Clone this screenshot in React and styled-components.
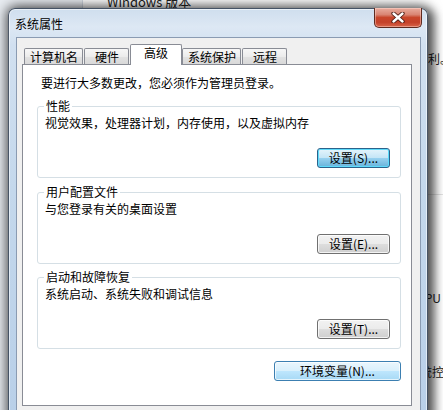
import React from 'react';
import styled, { createGlobalStyle } from 'styled-components';

const GlobalStyle = createGlobalStyle`
  html, body { margin: 0; padding: 0; }
  body {
    width: 443px; height: 410px; overflow: hidden; background: #fff;
    font-family: "Noto Sans CJK SC", "Noto Sans", sans-serif;
    font-size: 12px; color: #000;
  }
  * { box-sizing: border-box; }
`;

const Desktop = styled.div`
  position: relative;
  width: 443px;
  height: 410px;
  overflow: hidden;
  background: #fff;
`;

/* ---------- window behind the dialog ---------- */
const BackWindow = styled.div`
  position: absolute;
  inset: 0;
  display: flex;
`;
const NavPane = styled.div`
  width: 83px;
  flex: none;
  background: #e9edf2;
  border-right: 1px solid #d3dae3;
`;
const BackMain = styled.div`
  flex: 1;
  display: flex;
  flex-direction: column;
  min-width: 0;
`;
const BackLine = styled.div`
  margin-top: ${p => p.$top}px;
  padding-left: ${p => p.$indent}px;
  font-size: ${p => p.$size || 12}px;
  line-height: ${p => (p.$size ? p.$size + 3 : 14)}px;
  color: #222;
  white-space: nowrap;
`;
const BackRule = styled.div`
  margin-top: ${p => p.$top}px;
  height: 1px;
  background: #e2e2e2;
`;

/* ---------- dialog ---------- */
const Dialog = styled.div`
  position: absolute;
  left: 8px;
  top: 8px;
  width: 420px;
  height: 430px;
  display: flex;
  flex-direction: column;
  padding: 0 6px 0 7px;
  border: 1px solid rgba(20, 30, 45, 0.7);
  border-radius: 7px 7px 0 0;
  background: linear-gradient(180deg, #cfdeee 0px, #dde8f4 18px, #d1e0f0 36px, #c4d8ec 180px, #b8cfe8 420px);
  box-shadow: inset 0 0 0 1px rgba(255, 255, 255, 0.55), 0 0 12px 3px rgba(0, 0, 0, 0.5),
    5px 3px 10px 2px rgba(0, 0, 0, 0.45);
`;

const TitleBar = styled.div`
  height: 28px;
  flex: none;
  display: flex;
  margin: 0 -6px 0 -7px;
  padding: 0 5px 0 6px;
`;
const Title = styled.div`
  align-self: center;
  font-size: 12px;
  line-height: 14px;
  margin-top: 1px;
  color: #000;
`;
const CloseButton = styled.div`
  margin-left: auto;
  margin-top: -1px;
  width: 48px;
  height: 20px;
  display: flex;
  align-items: center;
  justify-content: center;
  border: 1px solid #5e2a20;
  border-top: none;
  border-radius: 0 0 5px 5px;
  background: linear-gradient(180deg, #e9ad9f 0%, #d98573 35%, #c8462b 50%, #c4412a 75%, #d8654a 100%);
  box-shadow: inset 0 0 0 1px rgba(255, 220, 210, 0.45);
`;

const Client = styled.div`
  flex: 1;
  display: flex;
  flex-direction: column;
  background: #f0f0f0;
  border: 1px solid #8a9bb2;
  padding: 6px 8px 0 5px;
`;

const TabStrip = styled.div`
  display: flex;
  align-items: flex-end;
  padding-left: 2px;
  height: 20px;
  position: relative;
  z-index: 1;
`;
const Tab = styled.div`
  height: ${p => (p.$active ? 21 : 16)}px;
  min-width: ${p => (p.$active ? 52 : 45)}px;
  margin-right: ${p => (p.$active ? 0 : 1)}px;
  margin-bottom: ${p => (p.$active ? -1 : 0)}px;
  padding: ${p => (p.$active ? '0 0 4px' : '0 4px 0 5px')};
  display: flex;
  align-items: center;
  justify-content: center;
  border: 1px solid #898c95;
  border-bottom: none;
  border-radius: 2px 2px 0 0;
  background: ${p =>
    p.$active ? '#fff' : 'linear-gradient(180deg, #f7f7f7 0%, #ececec 50%, #e2e2e2 51%, #d9d9d9 100%)'};
  font-size: 12px;
  line-height: 14px;
  white-space: nowrap;
`;

const Panel = styled.div`
  height: 342px;
  flex: none;
  display: flex;
  flex-direction: column;
  background: #fff;
  border: 1px solid #898c95;
  padding: 11px 10px 0 14px;
`;
const Intro = styled.div`
  margin-left: 4px;
  line-height: 14px;
`;

const Group = styled.div`
  position: relative;
  margin-top: ${p => p.$top}px;
  height: 72px;
  display: flex;
  flex-direction: column;
  border: 1px solid #d5dfe5;
  border-radius: 3px;
  padding: 9px 10px 9px 7px;
`;
const GroupLabel = styled.div`
  position: absolute;
  top: -8px;
  left: 6px;
  padding: 0 2px;
  background: #fff;
  line-height: 14px;
`;
const Desc = styled.div`
  line-height: 14px;
`;
const ButtonRow = styled.div`
  margin-top: auto;
  display: flex;
  justify-content: flex-end;
`;
const EnvRow = styled.div`
  margin-top: 12px;
  display: flex;
  justify-content: flex-end;
`;

const skins = {
  normal: `
    border: 1px solid #707070;
    background: linear-gradient(180deg, #f2f2f2 0%, #ebebeb 50%, #dddddd 51%, #cfcfcf 100%);
    box-shadow: inset 0 0 0 1px rgba(255,255,255,0.75);
  `,
  focus: `
    border: 1px solid #2c628b;
    background: linear-gradient(180deg, #e5f4fc 0%, #c4e5f6 50%, #98d1ef 51%, #68b3db 100%);
    box-shadow: inset 0 0 0 1px #5ddbfb;
  `,
  hot: `
    border: 1px solid #3c7fb1;
    background: linear-gradient(180deg, #eaf6fd 0%, #d9f0fc 50%, #bee6fd 51%, #a7d9f5 100%);
    box-shadow: inset 0 0 0 1px rgba(255,255,255,0.7);
  `,
};

const Button = styled.button`
  width: ${p => p.$w}px;
  height: 20px;
  padding: 0;
  border-radius: 3px;
  font-family: "Noto Sans CJK SC", "Noto Sans", sans-serif;
  font-size: 12px;
  line-height: 16px;
  color: #000;
  ${p => skins[p.$skin || 'normal']}
`;

const CloseIcon = () => (
  <svg width="14" height="11" viewBox="0 0 14 11">
    <path d="M2.5 1.5 L11.5 9.5 M11.5 1.5 L2.5 9.5" stroke="#4a1a12" strokeWidth="4.2" strokeLinecap="round" />
    <path d="M2.5 1.5 L11.5 9.5 M11.5 1.5 L2.5 9.5" stroke="#fff" strokeWidth="2.4" strokeLinecap="round" />
  </svg>
);

const tabs = ['计算机名', '硬件', '高级', '系统保护', '远程'];

const groups = [
  { label: '性能', desc: '视觉效果，处理器计划，内存使用，以及虚拟内存', btn: '设置(S)...', skin: 'focus', top: 16 },
  { label: '用户配置文件', desc: '与您登录有关的桌面设置', btn: '设置(E)...', top: 14 },
  { label: '启动和故障恢复', desc: '系统启动、系统失败和调试信息', btn: '设置(T)...', top: 13 },
];

export default function App() {
  return (
    <Desktop>
      <GlobalStyle />
      <BackWindow>
        <NavPane />
        <BackMain>
          <BackLine $top={-6} $indent={24} $size={13}>Windows 版本</BackLine>
          <BackLine $top={42} $indent={333}>权利。</BackLine>
          <BackRule $top={128} />
          <BackLine $top={96} $indent={334}>CPU</BackLine>
          <BackLine $top={60} $indent={337}>统控</BackLine>
        </BackMain>
      </BackWindow>

      <Dialog>
        <TitleBar>
          <Title>系统属性</Title>
          <CloseButton>
            <CloseIcon />
          </CloseButton>
        </TitleBar>
        <Client>
          <TabStrip>
            {tabs.map(t => (
              <Tab key={t} $active={t === '高级'}>{t}</Tab>
            ))}
          </TabStrip>
          <Panel>
            <Intro>要进行大多数更改，您必须作为管理员登录。</Intro>
            {groups.map(g => (
              <Group key={g.label} $top={g.top}>
                <GroupLabel>{g.label}</GroupLabel>
                <Desc>{g.desc}</Desc>
                <ButtonRow>
                  <Button $w={73} $skin={g.skin}>{g.btn}</Button>
                </ButtonRow>
              </Group>
            ))}
            <EnvRow>
              <Button $w={127} $skin="hot">环境变量(N)...</Button>
            </EnvRow>
          </Panel>
        </Client>
      </Dialog>
    </Desktop>
  );
}
